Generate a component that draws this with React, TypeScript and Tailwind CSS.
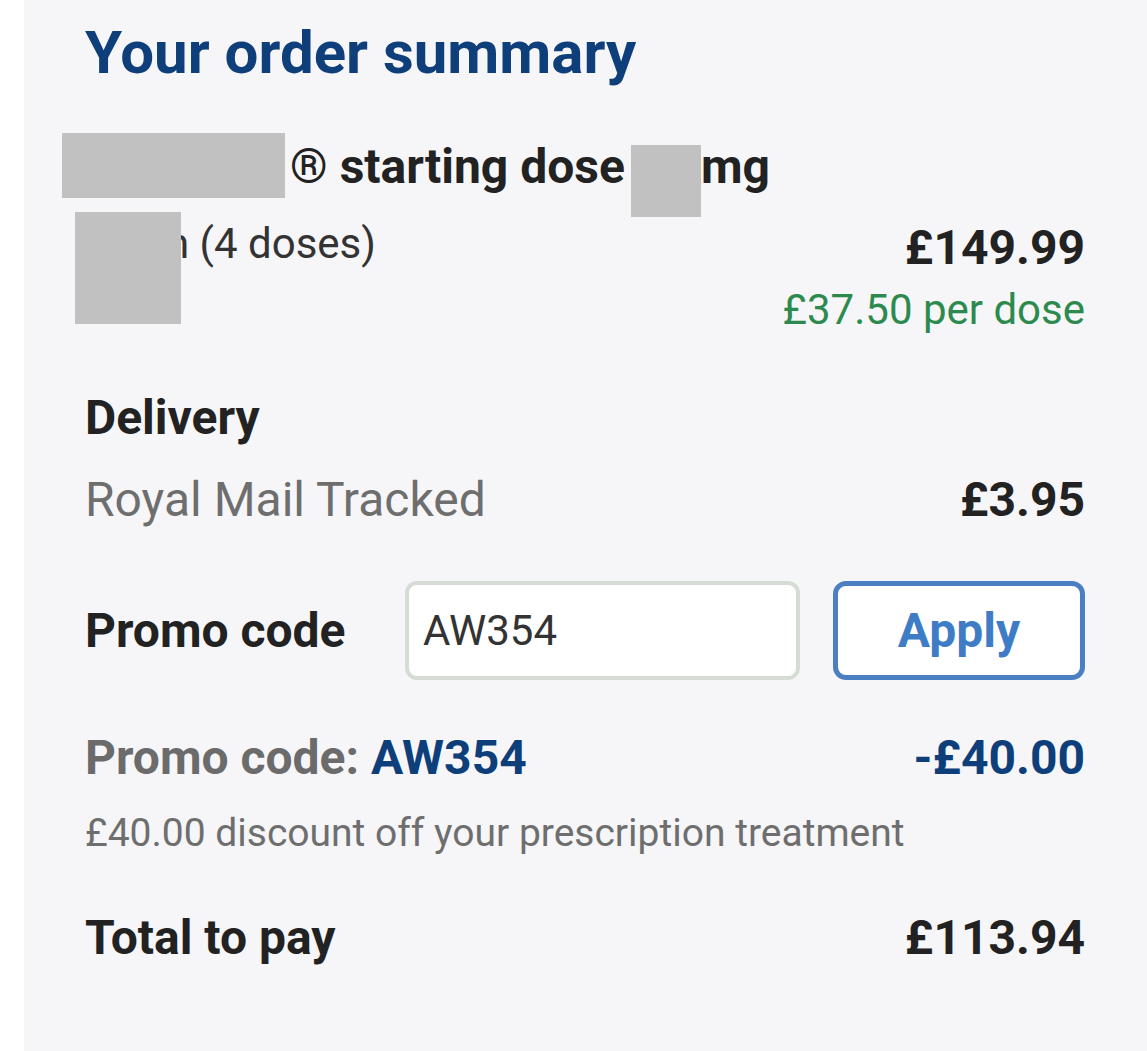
import type { ReactNode } from "react";

const fontStack = "font-['Roboto','Liberation_Sans',sans-serif]";

function Redacted({ className }: { className: string }) {
  return <span className={`absolute bg-[#c1c1c1] ${className}`} />;
}

function SummaryRow({ left, right, className = "" }: { left: ReactNode; right: ReactNode; className?: string }) {
  return (
    <div className={`flex items-start justify-between ${className}`}>
      <div>{left}</div>
      <div className="text-right">{right}</div>
    </div>
  );
}

export default function App() {
  return (
    <div className={`min-h-[1051px] bg-white pl-[24px] ${fontStack}`}>
      <div className="min-h-[1051px] bg-[#f6f6f8] pl-[61px] pr-[62px] pt-[23px]">
        <h1 className="text-[60px] font-bold leading-[60px] text-[#0e3f7b]">Your order summary</h1>

        {/* product */}
        <div className="relative mt-[56px] text-[48px] font-bold leading-[56px] text-[#222]">
          <Redacted className="left-[-23px] top-[-6px] h-[65px] w-[223px]" />
          <span className="pl-[205px]">® starting dose</span>
          <span className="relative ml-[6px] inline-block w-[70px]">
            <span className="absolute left-0 top-[-38px] h-[72px] w-[70px] bg-[#c1c1c1]" />
          </span>
          <span>mg</span>
        </div>

        <SummaryRow
          className="relative mt-[25px]"
          left={
            <>
              <Redacted className="left-[-10px] top-[-8px] h-[112px] w-[106px]" />
              <p className="pl-[81px] text-[42px] leading-[48px] text-[#333]">n (4 doses)</p>
            </>
          }
          right={
            <>
              <p className="text-[48px] font-bold leading-[56px] text-[#222]">£149.99</p>
              <p className="mt-[10px] text-[42px] leading-[48px] text-[#2d8a4e]">£37.50 per dose</p>
            </>
          }
        />

        {/* delivery */}
        <p className="mt-[56px] text-[48px] font-bold leading-[56px] text-[#222]">Delivery</p>
        <SummaryRow
          className="mt-[26px]"
          left={<p className="text-[48px] leading-[56px] text-[#6e6e6e]">Royal Mail Tracked</p>}
          right={<p className="text-[48px] font-bold leading-[56px] text-[#222]">£3.95</p>}
        />

        {/* promo */}
        <div className="mt-[53px] flex items-center">
          <span className="w-[320px] text-[48px] font-bold leading-[56px] text-[#222]">Promo code</span>
          <div className="flex h-[99px] w-[395px] items-center rounded-[12px] border-[4px] border-[#d5dcd5] bg-white pl-[14px] text-[42px] text-[#333]">
            AW354
          </div>
          <button className="ml-[33px] h-[99px] w-[252px] rounded-[13px] border-[5px] border-[#4a7fc1] bg-white text-[48px] font-bold text-[#3f7cc6]">
            Apply
          </button>
        </div>

        <SummaryRow
          className="mt-[50px]"
          left={
            <p className="text-[48px] font-bold leading-[56px] text-[#6b6b6b]">
              Promo code: <span className="text-[#0e3f7b]">AW354</span>
            </p>
          }
          right={<p className="text-[48px] font-bold leading-[56px] text-[#0e3f7b]">-£40.00</p>}
        />
        <p className="mt-[23px] text-[39px] leading-[48px] text-[#6e6e6e]">£40.00 discount off your prescription treatment</p>

        <SummaryRow
          className="mt-[53px]"
          left={<p className="text-[48px] font-bold leading-[56px] text-[#222]">Total to pay</p>}
          right={<p className="text-[48px] font-bold leading-[56px] text-[#222]">£113.94</p>}
        />
      </div>
    </div>
  );
}
